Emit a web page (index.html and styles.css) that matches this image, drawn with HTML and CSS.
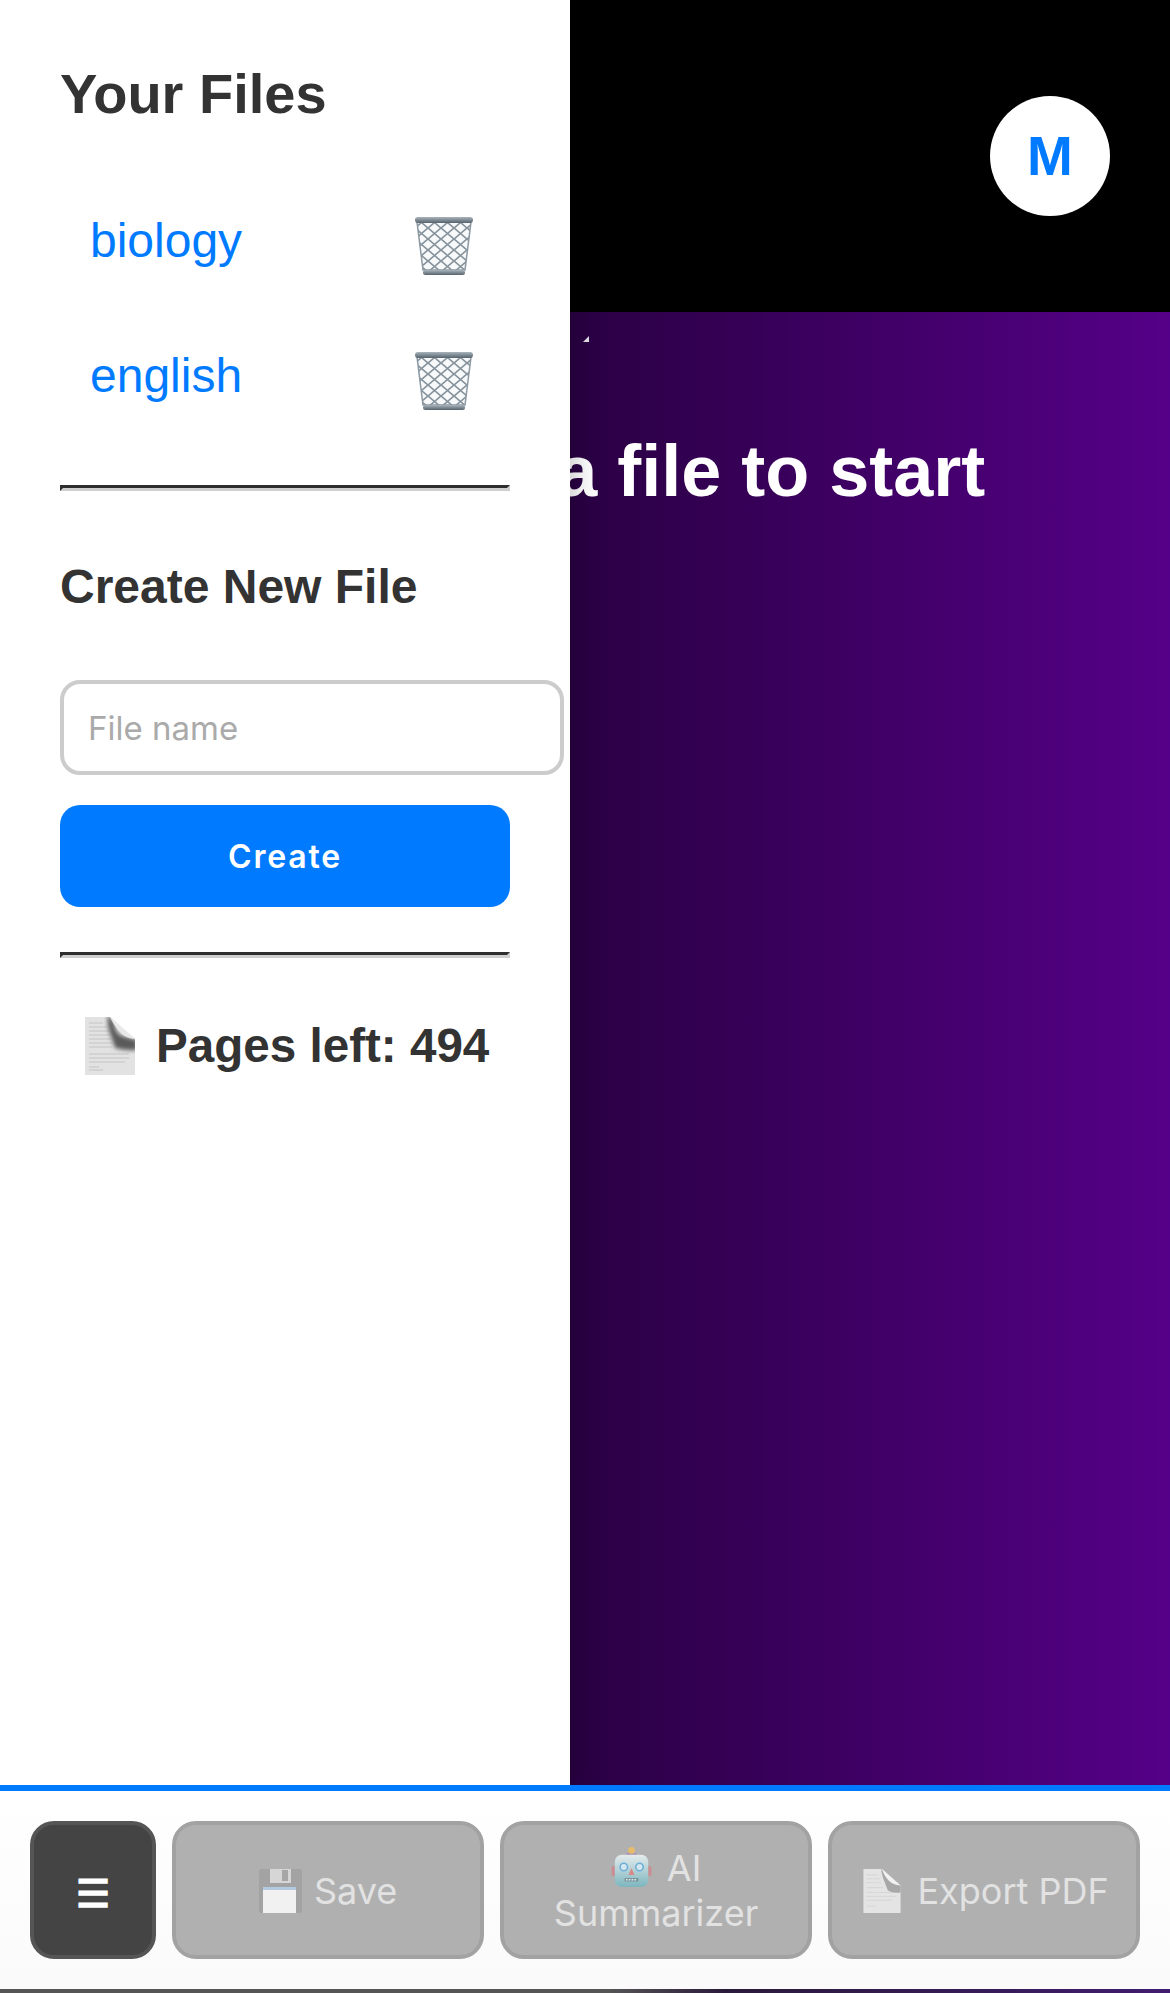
FILE: index.html
```html
<!DOCTYPE html>
<html lang="en">
<head>
    <meta charset="UTF-8">
    <meta name="viewport" content="width=device-width, initial-scale=1.0">
    <title>Your Files</title>
    <link rel="stylesheet" href="styles.css">
</head>
<body>

<div class="app">
    <header class="topbar">
        <div class="avatar">M</div>
    </header>

    <main class="editor">
        <span class="resize-tip"></span>
        <h1>Select a file to start</h1>
    </main>

    <aside class="sidebar">
        <h2>Your Files</h2>

        <div class="file-row">
            <a class="file-link" href="#">biology</a>
            <svg class="trash" viewBox="0 0 58 58">
                <symbol id="trash-icon" viewBox="0 0 58 58">
                    <defs>
                        <pattern id="mesh" width="13" height="11" patternUnits="userSpaceOnUse">
                            <path d="M0 0L13 11M13 0L0 11" stroke="#87939c" stroke-width="1.7" fill="none"/>
                        </pattern>
                        <linearGradient id="rim" x1="0" y1="0" x2="0" y2="1">
                            <stop offset="0" stop-color="#a9b4bc"/>
                            <stop offset="1" stop-color="#56636d"/>
                        </linearGradient>
                    </defs>
                    <path d="M2 5H56L50 53H8Z" fill="#f7f9fa"/>
                    <path d="M2 5H56L50 53H8Z" fill="url(#mesh)" stroke="#8d99a2" stroke-width="1.5"/>
                    <rect x="0" y="0" width="58" height="6" rx="3" fill="url(#rim)"/>
                    <rect x="8" y="53" width="42" height="5" rx="2.5" fill="url(#rim)"/>
                </symbol>
                <use href="#trash-icon"/>
            </svg>
        </div>
        <div class="file-row">
            <a class="file-link" href="#">english</a>
            <svg class="trash" viewBox="0 0 58 58"><use href="#trash-icon"/></svg>
        </div>

        <hr class="divider">

        <h3>Create New File</h3>
        <input class="file-input" type="text" placeholder="File name">
        <button class="create-btn">Create</button>

        <hr class="divider">

        <div class="pages-left">
            <svg class="page-icon" viewBox="0 0 50 58">
                <defs>
                    <clipPath id="page-clip"><path d="M0 0H25L50 22V58H0Z"/></clipPath>
                    <filter id="soft"><feGaussianBlur stdDeviation="2.2"/></filter>
                </defs>
                <path d="M0 0H25L50 22V58H0Z" fill="#e2e2e2"/>
                <path d="M4 6H18M4 10H22M4 14H24M4 18H25M4 22H26M4 26H27M4 30H27M4 37H44M4 41H44M4 45H40M4 50H14M4 53H18" stroke="#c4c4c4" stroke-width="1"/>
                <g clip-path="url(#page-clip)">
                    <path d="M23 -2Q29 2 30 10Q32 19 41 20L52 23V33Q42 34 30 31L27 22Q21 8 23 -2Z" fill="#5a5a5a" filter="url(#soft)"/>
                </g>
                <path d="M25 0L50 22Q40 21 35 15Q29 9 25 0Z" fill="#e9e9e9"/>
            </svg>
            <span>Pages left: 494</span>
        </div>
    </aside>

    <footer class="toolbar">
        <button class="tool-btn menu-btn">☰</button>
        <button class="tool-btn" disabled>
            <svg class="save-icon" viewBox="0 0 43 44">
                <rect width="43" height="44" rx="2" fill="#a3a3a3"/>
                <rect x="11" y="0" width="21" height="14" fill="#d6d6d6"/>
                <rect x="23" y="1" width="6" height="11" fill="#a6a6a6"/>
                <rect x="4" y="18" width="33" height="26" fill="#f1f1f1"/>
                <rect x="4" y="18" width="33" height="3" fill="#b4cae2"/>
            </svg> Save
        </button>
        <button class="tool-btn" disabled>
            <svg class="robot-icon" viewBox="0 0 40 40">
                <defs>
                    <linearGradient id="robot-head" x1="0" y1="0" x2="0" y2="1">
                        <stop offset="0" stop-color="#e4ebec"/>
                        <stop offset="1" stop-color="#7db6bf"/>
                    </linearGradient>
                </defs>
                <rect x="0" y="19" width="5" height="10" rx="2" fill="#c98d93"/>
                <rect x="35" y="19" width="5" height="10" rx="2" fill="#c98d93"/>
                <ellipse cx="20" cy="8" rx="5.5" ry="3" fill="#a58fb8"/>
                <circle cx="20" cy="3.4" r="3.4" fill="#e6bb6c"/>
                <rect x="3.3" y="7.7" width="33.4" height="32.3" rx="7" fill="url(#robot-head)"/>
                <circle cx="12.3" cy="20" r="3.7" fill="#d4e6ef" stroke="#6fb0d8" stroke-width="1.6"/>
                <circle cx="28" cy="20" r="3.7" fill="#d4e6ef" stroke="#6fb0d8" stroke-width="1.6"/>
                <path d="M20 21L17 28H23Z" fill="#d98888"/>
                <rect x="13" y="31" width="14" height="3.4" rx="1" fill="#78959b"/>
                <path d="M14.5 32.7H25.5" stroke="#e8eeee" stroke-width="1.6" stroke-dasharray="1.6 1.2"/>
            </svg> AI Summarizer
        </button>
        <button class="tool-btn" disabled>
            <svg class="export-icon" viewBox="0 0 38 45">
                <path d="M0 0H19L38 17V45H0Z" fill="#e4e4e4"/>
                <path d="M3 6H15M3 10H17M3 14H18M3 19H20M3 24H34M3 28H34M3 32H30M3 38H12" stroke="#d6d6d6" stroke-width="1"/>
                <path d="M18 0L38 17V24Q30 25 25 22L23 17Q19 8 18 0Z" fill="#a8a8a8"/>
                <path d="M19 0L38 17Q30 16 26 12Q21 7 19 0Z" fill="#f1f1f1"/>
            </svg> Export PDF
        </button>
    </footer>

    <div class="bottom-strip"></div>
</div>

</body>
</html>
```

FILE: styles.css
```css
body {
    margin: 0;
    font-family: 'Liberation Sans', Arial, sans-serif;
    background: #000;
}
.app {
    position: relative;
    display: flex;
    flex-direction: column;
    height: 1993px;
    overflow: hidden;
}

/* top bar */
.topbar {
    flex: 0 0 312px;
    display: flex;
    justify-content: flex-end;
    align-items: flex-start;
    box-sizing: border-box;
    padding: 96px 60px 0 0;
    background: #000;
}
.avatar {
    width: 120px;
    height: 120px;
    border-radius: 50%;
    background: white;
    color: #007BFF;
    font-size: 55px;
    font-weight: bold;
    display: flex;
    align-items: center;
    justify-content: center;
}

/* main area behind the sidebar */
.editor {
    flex: 1;
    position: relative;
    padding: 116px 0 0 325px;
    background: linear-gradient(90deg, #000, #550088);
}
.editor h1 {
    margin: 0;
    color: white;
    font-size: 72px;
    line-height: 86px;
    font-weight: bold;
}
.resize-tip {
    position: absolute;
    left: 583px;
    top: 24px;
    width: 0;
    height: 0;
    border-left: 6px solid transparent;
    border-bottom: 6px solid #e6e0ea;
}

/* sidebar */
.sidebar {
    position: absolute;
    left: 0;
    top: 0;
    z-index: 1;
    box-sizing: border-box;
    width: 570px;
    height: 1785px;
    padding: 61px 60px 0;
    background: #fff;
    box-shadow: 0 0 30px rgba(0,0,0,0.3);
    color: #333;
}
.sidebar h2 {
    margin: 0 0 45px;
    font-size: 56px;
    line-height: 66px;
}
.sidebar h3 {
    margin: 67px 0 64px;
    font-size: 48px;
    line-height: 58px;
}
.file-row {
    display: flex;
    justify-content: space-between;
    align-items: center;
    height: 135px;
    padding: 0 37px 0 30px;
}
.file-link {
    color: #007BFF;
    font-size: 48px;
    line-height: 56px;
    margin-top: 2px;
    text-decoration: none;
}
.trash {
    width: 58px;
    height: 58px;
    margin-top: 13px;
}
.divider {
    height: 0;
    margin: 43px 0 0;
    border-style: solid;
    border-width: 3px;
    border-color: #2e2e2e #cfcfcf #cfcfcf #2e2e2e;
}
.file-input {
    display: block;
    box-sizing: border-box;
    width: 504px;
    height: 95px;
    padding: 0 24px;
    border: 4px solid #ccc;
    border-radius: 20px;
    background: white;
    font-family: Inter, sans-serif;
    font-size: 33px;
}
.file-input::placeholder {
    color: #aaa;
}
.create-btn {
    display: block;
    width: 100%;
    height: 102px;
    margin: 30px 0 45px;
    border: none;
    border-radius: 20px;
    background: #007BFF;
    color: white;
    font-family: Inter, sans-serif;
    font-size: 32px;
    font-weight: 600;
    letter-spacing: 1.8px;
}
.create-btn + .divider {
    margin-top: 0;
}
.pages-left {
    display: flex;
    align-items: flex-start;
    gap: 21px;
    margin-top: 60px;
    padding-left: 25px;
    font-size: 47.6px;
    line-height: 56px;
    font-weight: bold;
}
.page-icon {
    width: 50px;
    height: 58px;
    margin-top: -1px;
}

/* bottom toolbar */
.toolbar {
    position: relative;
    z-index: 2;
    display: flex;
    gap: 16px;
    padding: 30px;
    border-top: 6px solid #007BFF;
    background: linear-gradient(#fff, #fafafa);
}
.tool-btn {
    flex: 1;
    box-sizing: border-box;
    height: 138px;
    padding: 2px 20px 0;
    border: 4px solid #a2a2a2;
    border-radius: 24px;
    background: #b0b0b0;
    color: #e2e2e2;
    font-family: Inter, sans-serif;
    font-size: 36px;
    line-height: 45px;
    text-align: center;
}
.menu-btn {
    flex: 0 0 126px;
    padding: 8px 0 0;
    border-color: #555;
    background: #444;
    color: white;
    font-family: 'DejaVu Sans', sans-serif;
    font-size: 38px;
    -webkit-text-stroke: 1.5px white;
}
.save-icon {
    width: 43px;
    height: 44px;
    margin-right: 2px;
    vertical-align: -9px;
}
.robot-icon {
    width: 41px;
    height: 40px;
    margin-right: 5px;
    vertical-align: -6px;
}
.export-icon {
    width: 38px;
    height: 44px;
    margin: 0 6px 0 4px;
    vertical-align: -9px;
}
.bottom-strip {
    flex: 0 0 4px;
    background: linear-gradient(90deg, #555 0%, #555 52%, #2a1a3a 62%, #401c70 100%);
}
```
